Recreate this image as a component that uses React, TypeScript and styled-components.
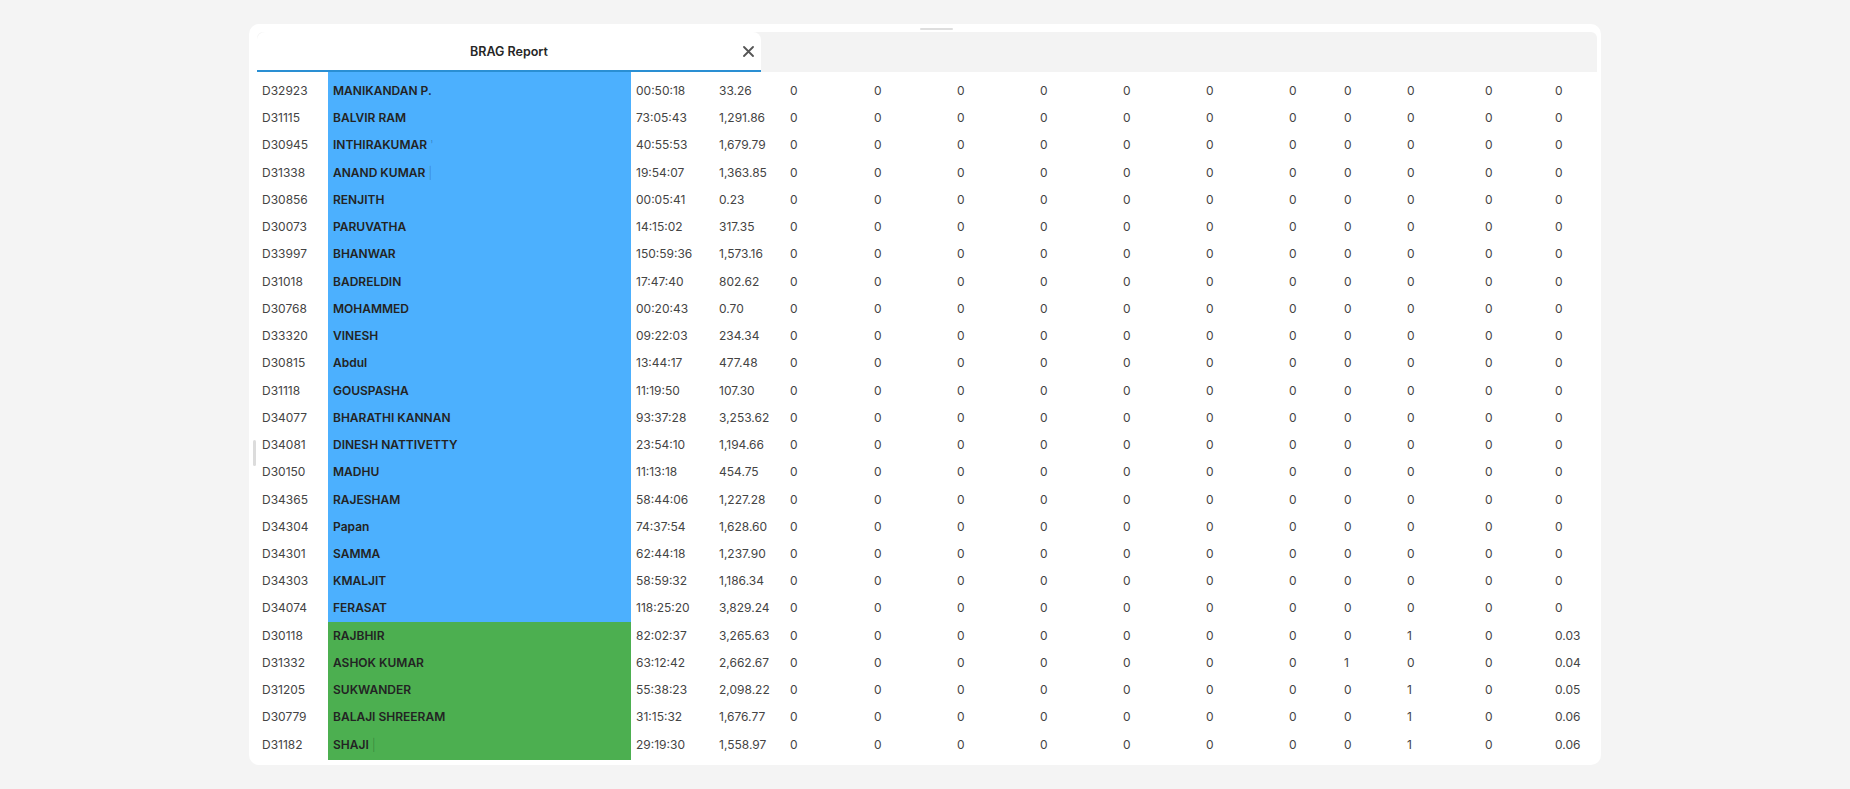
import styled, { createGlobalStyle } from "styled-components";

type Row = {
  id: string;
  name: string;
  mark?: string;
  time: string;
  amount: string;
  counts: string[];
  band: "blue" | "green";
};

const GlobalStyle = createGlobalStyle`
  html, body { margin: 0; padding: 0; background: #f4f4f4; }
  body { font-family: Inter, "Noto Sans", Arial, sans-serif; -webkit-font-smoothing: antialiased; }
  * { box-sizing: border-box; }
`;

const COLS = "71px 303px 83px 71px 84px 83px 83px 83px 83px 83px 55px 63px 78px 70px 47px";
const BAND = { blue: "#4cb0fe", green: "#4caf50" };

const Page = styled.div` padding: 24px 0; `;

const Card = styled.div`
  position: relative;
  width: 1352px;
  margin: 0 auto;
  padding: 8px 4px 5px 8px;
  background: #fff;
  border-radius: 10px;
`;

const TopGrip = styled.div`
  position: absolute; top: 4px; left: 671px;
  width: 33px; height: 2px; border-radius: 1px; background: #dedede;
`;
const SideGrip = styled.div`
  position: absolute; top: 416px; left: 4px;
  width: 3px; height: 26px; border-radius: 2px; background: #dcdcdc;
`;

const TabBar = styled.div`
  display: flex; height: 40px; background: #f3f3f3; border-radius: 6px 6px 0 0;
`;
const Tab = styled.div`
  position: relative;
  display: flex; align-items: center; justify-content: center;
  width: 504px; height: 40px;
  background: #fff;
  border-radius: 8px 8px 0 0;
  border-bottom: 2px solid #2a8fd3;
  font-size: 12.5px; font-weight: 600; color: #262626;
`;
const Close = styled.button`
  position: absolute; right: 5px; top: 11px;
  width: 16px; height: 16px; padding: 0; border: 0; background: transparent; cursor: pointer;
  display: flex; align-items: center; justify-content: center; color: #555;
`;

const Body = styled.div`
  & > div:first-child > div { padding-top: 5px; }
  & > div:last-child > div { padding-bottom: 2px; }
`;
const RowLine = styled.div`
  display: grid; grid-template-columns: ${COLS};
`;
const Cell = styled.div<{ $bg?: string; $strong?: boolean }>`
  box-sizing: content-box;
  height: 27.24px; line-height: 27.24px;
  padding: 0 5px;
  overflow: hidden; white-space: nowrap;
  font-size: 12px;
  font-weight: ${(p) => (p.$strong ? 600 : 400)};
  color: ${(p) => (p.$strong ? "#232323" : "#444")};
  background: ${(p) => p.$bg || "transparent"};
`;
const Faint = styled.span` color: rgba(0, 0, 0, 0.22); font-weight: 400; margin-left: 3px; `;

const z = (n = 11) => Array.from({ length: n }, () => "0");
const greenTail = (a: string, b: string, c: string, d: string) => [...z(7), a, b, c, d];

const rows: Row[] = [
  { id: "D32923", name: "MANIKANDAN P.", time: "00:50:18", amount: "33.26", counts: z(), band: "blue" },
  { id: "D31115", name: "BALVIR RAM", time: "73:05:43", amount: "1,291.86", counts: z(), band: "blue" },
  { id: "D30945", name: "INTHIRAKUMAR", mark: "'", time: "40:55:53", amount: "1,679.79", counts: z(), band: "blue" },
  { id: "D31338", name: "ANAND KUMAR", mark: "|", time: "19:54:07", amount: "1,363.85", counts: z(), band: "blue" },
  { id: "D30856", name: "RENJITH", time: "00:05:41", amount: "0.23", counts: z(), band: "blue" },
  { id: "D30073", name: "PARUVATHA", time: "14:15:02", amount: "317.35", counts: z(), band: "blue" },
  { id: "D33997", name: "BHANWAR", time: "150:59:36", amount: "1,573.16", counts: z(), band: "blue" },
  { id: "D31018", name: "BADRELDIN", time: "17:47:40", amount: "802.62", counts: z(), band: "blue" },
  { id: "D30768", name: "MOHAMMED", time: "00:20:43", amount: "0.70", counts: z(), band: "blue" },
  { id: "D33320", name: "VINESH", time: "09:22:03", amount: "234.34", counts: z(), band: "blue" },
  { id: "D30815", name: "Abdul", time: "13:44:17", amount: "477.48", counts: z(), band: "blue" },
  { id: "D31118", name: "GOUSPASHA", time: "11:19:50", amount: "107.30", counts: z(), band: "blue" },
  { id: "D34077", name: "BHARATHI KANNAN", time: "93:37:28", amount: "3,253.62", counts: z(), band: "blue" },
  { id: "D34081", name: "DINESH NATTIVETTY", time: "23:54:10", amount: "1,194.66", counts: z(), band: "blue" },
  { id: "D30150", name: "MADHU", time: "11:13:18", amount: "454.75", counts: z(), band: "blue" },
  { id: "D34365", name: "RAJESHAM", time: "58:44:06", amount: "1,227.28", counts: z(), band: "blue" },
  { id: "D34304", name: "Papan", time: "74:37:54", amount: "1,628.60", counts: z(), band: "blue" },
  { id: "D34301", name: "SAMMA", time: "62:44:18", amount: "1,237.90", counts: z(), band: "blue" },
  { id: "D34303", name: "KMALJIT", time: "58:59:32", amount: "1,186.34", counts: z(), band: "blue" },
  { id: "D34074", name: "FERASAT", time: "118:25:20", amount: "3,829.24", counts: z(), band: "blue" },
  { id: "D30118", name: "RAJBHIR", time: "82:02:37", amount: "3,265.63", counts: greenTail("0", "1", "0", "0.03"), band: "green" },
  { id: "D31332", name: "ASHOK KUMAR", time: "63:12:42", amount: "2,662.67", counts: greenTail("1", "0", "0", "0.04"), band: "green" },
  { id: "D31205", name: "SUKWANDER", time: "55:38:23", amount: "2,098.22", counts: greenTail("0", "1", "0", "0.05"), band: "green" },
  { id: "D30779", name: "BALAJI SHREERAM", time: "31:15:32", amount: "1,676.77", counts: greenTail("0", "1", "0", "0.06"), band: "green" },
  { id: "D31182", name: "SHAJI", mark: "|", time: "29:19:30", amount: "1,558.97", counts: greenTail("0", "1", "0", "0.06"), band: "green" },
];

export default function App() {
  return (
    <Page>
      <GlobalStyle />
      <Card>
        <TopGrip />
        <SideGrip />
        <TabBar>
          <Tab>
            BRAG Report
            <Close aria-label="close">
              <svg width="11" height="11" viewBox="0 0 11 11">
                <path d="M1 1 L10 10 M10 1 L1 10" stroke="currentColor" strokeWidth="1.8" strokeLinecap="round" />
              </svg>
            </Close>
          </Tab>
        </TabBar>
        <Body>
          {rows.map((r) => (
            <RowLine key={r.id}>
              <Cell>{r.id}</Cell>
              <Cell $strong $bg={BAND[r.band]}>
                {r.name}
                {r.mark && <Faint>{r.mark}</Faint>}
              </Cell>
              <Cell>{r.time}</Cell>
              <Cell>{r.amount}</Cell>
              {r.counts.map((c, i) => (
                <Cell key={i}>{c}</Cell>
              ))}
            </RowLine>
          ))}
        </Body>
      </Card>
    </Page>
  );
}
